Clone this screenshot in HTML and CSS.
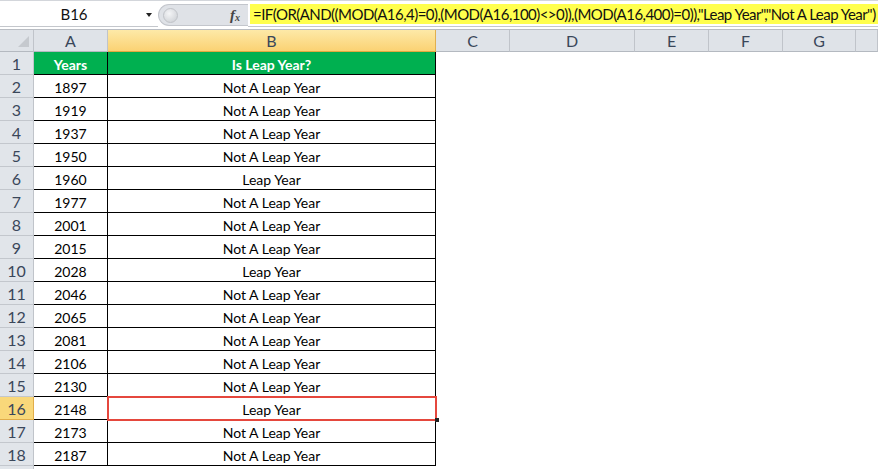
FILE: index.html
```html
<!DOCTYPE html>
<html>

<head>
  <title>Leap Year Check</title>
  <link rel="stylesheet" href="styles.css">
</head>

<body>
  <div class="toolbar">
    <div class="namebox">
      <span class="name">B16</span>
      <span class="caret"></span>
    </div>
    <div class="fxbox">
      <span class="knob"></span>
      <span class="fx">f<sub>x</sub></span>
    </div>
    <div class="formula">
      <span class="hl">=IF(OR(AND((MOD(A16,4)=0),(MOD(A16,100)&lt;&gt;0)),(MOD(A16,400)=0)),"Leap Year","Not A Leap Year")</span>
    </div>
  </div>

  <div class="sheet">
    <div class="colheads">
      <div class="corner"><span class="tri"></span></div>
      <div class="ch">A</div>
      <div class="ch selected">B</div>
      <div class="ch">C</div>
      <div class="ch">D</div>
      <div class="ch">E</div>
      <div class="ch">F</div>
      <div class="ch">G</div>
      <div class="ch"></div>
    </div>

    <div class="row title">
      <div class="rh">1</div>
      <div class="cell">Years</div>
      <div class="cell">Is Leap Year?</div>
    </div>
    <div class="row"><div class="rh">2</div><div class="cell">1897</div><div class="cell">Not A Leap Year</div></div>
    <div class="row"><div class="rh">3</div><div class="cell">1919</div><div class="cell">Not A Leap Year</div></div>
    <div class="row"><div class="rh">4</div><div class="cell">1937</div><div class="cell">Not A Leap Year</div></div>
    <div class="row"><div class="rh">5</div><div class="cell">1950</div><div class="cell">Not A Leap Year</div></div>
    <div class="row"><div class="rh">6</div><div class="cell">1960</div><div class="cell">Leap Year</div></div>
    <div class="row"><div class="rh">7</div><div class="cell">1977</div><div class="cell">Not A Leap Year</div></div>
    <div class="row"><div class="rh">8</div><div class="cell">2001</div><div class="cell">Not A Leap Year</div></div>
    <div class="row"><div class="rh">9</div><div class="cell">2015</div><div class="cell">Not A Leap Year</div></div>
    <div class="row"><div class="rh">10</div><div class="cell">2028</div><div class="cell">Leap Year</div></div>
    <div class="row"><div class="rh">11</div><div class="cell">2046</div><div class="cell">Not A Leap Year</div></div>
    <div class="row"><div class="rh">12</div><div class="cell">2065</div><div class="cell">Not A Leap Year</div></div>
    <div class="row"><div class="rh">13</div><div class="cell">2081</div><div class="cell">Not A Leap Year</div></div>
    <div class="row"><div class="rh">14</div><div class="cell">2106</div><div class="cell">Not A Leap Year</div></div>
    <div class="row"><div class="rh">15</div><div class="cell">2130</div><div class="cell">Not A Leap Year</div></div>
    <div class="row"><div class="rh active">16</div><div class="cell">2148</div><div class="cell current">Leap Year</div></div>
    <div class="row"><div class="rh">17</div><div class="cell">2173</div><div class="cell">Not A Leap Year</div></div>
    <div class="row"><div class="rh">18</div><div class="cell">2187</div><div class="cell">Not A Leap Year</div></div>
    <div class="row blank"><div class="rh"></div></div>
  </div>
</body>

</html>
```

FILE: styles.css
```css
body {
  margin: 0;
  font-family: Lato, "Liberation Sans", sans-serif;
  background: white;
  overflow: hidden;
}

/* formula bar */
.toolbar {
  display: flex;
  height: 29px;
  box-sizing: border-box;
  border-top: 1px solid #d3d6db;
  padding-bottom: 2px;
}

.namebox {
  width: 158px;
  display: flex;
  align-items: center;
  border-bottom: 1px solid #c4c7cc;
}

.name {
  flex: 1;
  text-align: center;
  font-size: 15px;
  color: #111;
  padding-left: 2px;
}

.caret {
  width: 0;
  height: 0;
  border-left: 3.5px solid transparent;
  border-right: 3.5px solid transparent;
  border-top: 4px solid #222;
  margin-right: 6px;
  margin-top: 2px;
}

.fxbox {
  width: 90px;
  margin-top: 3px;
  margin-bottom: 1px;
  display: flex;
  align-items: center;
  justify-content: space-between;
  background: #dfe2e7;
  border: 1px solid #c3c6cc;
  border-right: none;
  border-radius: 11px 0 0 11px;
  box-sizing: border-box;
}

.knob {
  width: 13px;
  height: 13px;
  margin-left: 4px;
  border-radius: 50%;
  background: radial-gradient(circle at 40% 35%, #f4f5f7, #c9ccd1);
  border: 1px solid #c0c3c8;
}

.fx {
  font-family: "Liberation Serif", serif;
  font-style: italic;
  font-weight: bold;
  font-size: 15px;
  color: #444;
  margin-right: 8px;
}

.fx sub {
  font-size: 10px;
  vertical-align: baseline;
  position: relative;
  top: 1px;
}

.formula {
  flex: 1;
  display: flex;
  align-items: center;
  padding-left: 2px;
  border-bottom: 1px solid #c4c7cc;
  white-space: nowrap;
  overflow: hidden;
}

.hl {
  background: #ffff4d;
  font-size: 15px;
  letter-spacing: -0.54px;
  line-height: 20px;
  padding: 0 3px 0 3px;
  color: #111;
}

/* sheet */
.colheads {
  display: grid;
  grid-template-columns: 34px 74px 328px 74px 125px 74px 74px 73px 1fr;
  height: 23px;
  border-top: 1px solid #b9bdc3;
  box-sizing: border-box;
}

.corner,
.ch {
  background: #dfe3e8;
  border-right: 1px solid #c0c4ca;
  border-bottom: 1px solid #b4b9c0;
  color: #3a475a;
  font-size: 16px;
  text-align: center;
  line-height: 21px;
}

.corner {
  position: relative;
}

.tri {
  position: absolute;
  right: 4px;
  bottom: 4px;
  width: 0;
  height: 0;
  border-left: 11px solid transparent;
  border-bottom: 11px solid #c5c9ce;
}

.ch.selected {
  background: linear-gradient(#fde9a8, #fbd273);
  border-right-color: #e1b04f;
  border-bottom-color: #e2a840;
}

.row {
  display: grid;
  grid-template-columns: 34px 74px 328px;
  height: 23px;
}

.rh {
  background: #e1e5ea;
  border-right: 1px solid #c0c4ca;
  border-bottom: 1px solid #c3c7cd;
  color: #3a475a;
  font-size: 16px;
  text-align: center;
  box-sizing: border-box;
  padding-top: 2px;
  line-height: 20px;
}

.rh.active {
  background: #f9d87a;
  border-right-color: #e1ad4a;
  border-bottom-color: #e1ad4a;
}

.cell {
  border-right: 1px solid #000;
  border-bottom: 1px solid #000;
  text-align: center;
  font-size: 14px;
  box-sizing: border-box;
  padding-top: 4px;
  line-height: 18px;
  color: #000;
  white-space: nowrap;
}

.title .cell {
  background: #00b050;
  color: white;
  font-weight: bold;
}

.cell.current {
  position: relative;
}

.cell.current::after {
  content: "";
  position: absolute;
  top: -1px;
  left: -1px;
  right: -2px;
  bottom: -2px;
  border: 2.5px solid #e5473d;
}

.cell.current::before {
  content: "";
  position: absolute;
  right: -4px;
  bottom: -3px;
  width: 4px;
  height: 4px;
  background: #222;
  z-index: 1;
}
```
